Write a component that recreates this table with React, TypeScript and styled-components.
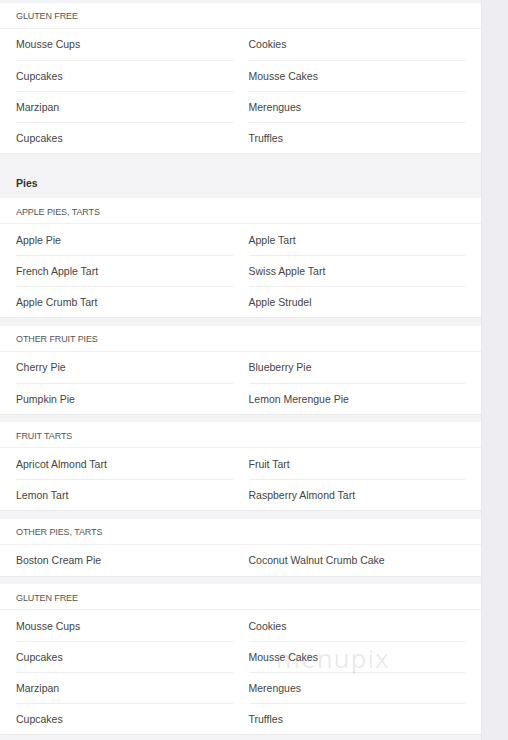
import React from "react";
import styled, { createGlobalStyle } from "styled-components";

type Group = {
  title: string;
  items: string[];
};

type Category = {
  name?: string;
  groups: Group[];
};

const glutenFree: Group = {
  title: "Gluten Free",
  items: ["Mousse Cups", "Cookies", "Cupcakes", "Mousse Cakes", "Marzipan", "Merengues", "Cupcakes", "Truffles"],
};

const menu: Category[] = [
  { groups: [glutenFree] },
  {
    name: "Pies",
    groups: [
      {
        title: "Apple Pies, Tarts",
        items: ["Apple Pie", "Apple Tart", "French Apple Tart", "Swiss Apple Tart", "Apple Crumb Tart", "Apple Strudel"],
      },
      {
        title: "Other Fruit Pies",
        items: ["Cherry Pie", "Blueberry Pie", "Pumpkin Pie", "Lemon Merengue Pie"],
      },
      {
        title: "Fruit Tarts",
        items: ["Apricot Almond Tart", "Fruit Tart", "Lemon Tart", "Raspberry Almond Tart"],
      },
      {
        title: "Other Pies, Tarts",
        items: ["Boston Cream Pie", "Coconut Walnut Crumb Cake"],
      },
      glutenFree,
    ],
  },
];

const GlobalStyle = createGlobalStyle`
  html, body {
    margin: 0;
    padding: 0;
    background: #eeeef2;
  }
  body {
    font-family: "Liberation Sans", Arial, sans-serif;
    overflow: hidden;
  }
`;

const Page = styled.div`
  display: flex;
  min-height: 740px;
  position: relative;
`;

const Main = styled.main`
  width: 481px;
  flex-shrink: 0;
  background: #f4f4f6;
  padding-top: 2.5px;
`;

const Aside = styled.aside`
  flex: 1;
  background: #eeeef2;
  border-left: 1px solid #e7e7ec;
`;

const CategoryTitle = styled.h2`
  margin: 0;
  padding: 15px 16px 8px;
  font-size: 10.5px;
  line-height: 14px;
  font-weight: 700;
  color: #333;
`;

const Card = styled.div`
  background: #fff;
  box-shadow: 0 1px 0 #ececef;
  margin-bottom: 8.5px;
`;

const CardHeader = styled.div`
  height: 26px;
  box-sizing: border-box;
  padding: 2px 16px 0;
  display: flex;
  align-items: center;
  border-bottom: 1px solid #f0f0f2;
  font-size: 9px;
  text-transform: uppercase;
  color: #555;
  letter-spacing: -0.1px;
`;

const ItemGrid = styled.div`
  display: grid;
  grid-template-columns: 1fr 1fr;
  column-gap: 16px;
  padding: 0 16px;
`;

const Item = styled.div<{ $first: boolean }>`
  height: 31px;
  box-sizing: border-box;
  display: flex;
  align-items: center;
  border-top: ${(p) => (p.$first ? "none" : "1px solid #ededf0")};
  font-size: 10.5px;
  color: #444;
`;

const Watermark = styled.div`
  position: absolute;
  left: 276px;
  top: 640px;
  font-family: "Open Sans", "Liberation Sans", sans-serif;
  font-size: 26px;
  letter-spacing: 1px;
  color: rgba(120, 120, 130, 0.16);
  pointer-events: none;
`;

const App: React.FC = () => (
  <>
    <GlobalStyle />
    <Page>
      <Main>
        {menu.map((cat, ci) => (
          <section key={ci}>
            {cat.name && <CategoryTitle>{cat.name}</CategoryTitle>}
            {cat.groups.map((g, gi) => (
              <Card key={gi}>
                <CardHeader>{g.title}</CardHeader>
                <ItemGrid>
                  {g.items.map((it, i) => (
                    <Item key={i} $first={i < 2}>
                      {it}
                    </Item>
                  ))}
                </ItemGrid>
              </Card>
            ))}
          </section>
        ))}
      </Main>
      <Aside />
      <Watermark>menupix</Watermark>
    </Page>
  </>
);

export default App;
